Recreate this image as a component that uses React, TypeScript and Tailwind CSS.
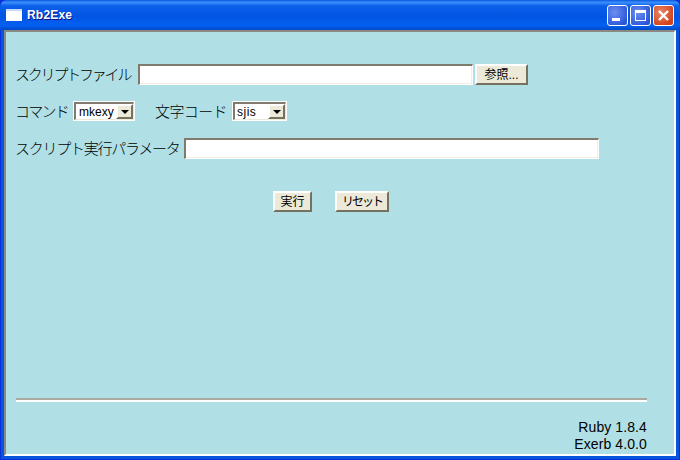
const sans = "font-['Liberation_Sans','Noto_Sans_CJK_JP',sans-serif]";

function TextBox({ className }: { className: string }) {
  return (
    <div className={`h-[21px] border-b border-l-2 border-r border-t-2 border-b-white border-l-[#7f7b6d] border-r-white border-t-[#7f7b6d] bg-white shadow-[inset_-1px_-1px_0_#f1efe2] ${className}`} />
  );
}

function PushButton({ label, className }: { label: string; className: string }) {
  return (
    <button className={`flex h-[21px] items-center justify-center border-2 border-b-[#75715f] border-l-white border-r-[#75715f] border-t-white bg-[#ece9d8] text-[12px] leading-none text-black ${className}`}>
      {label}
    </button>
  );
}

function Combo({ value, className, valueClass }: { value: string; className: string; valueClass: string }) {
  return (
    <div className={`h-[20px] border border-white ${className}`}>
      <div className="flex h-full items-stretch border-b border-l-2 border-r border-t-2 border-b-[#ece9d8] border-l-[#7f7b6d] border-r-[#ece9d8] border-t-[#7f7b6d] bg-white">
        <span className={`flex-1 self-center text-[12px] leading-none text-black ${valueClass}`}>{value}</span>
        <span className="flex w-[17px] items-center justify-center border-2 border-b-[#75715f] border-l-white border-r-[#75715f] border-t-white bg-[#ece9d8]">
          <svg width="8" height="4" viewBox="0 0 8 4"><path d="M0 0h8L4 4z" fill="#000" /></svg>
        </span>
      </div>
    </div>
  );
}

function CaptionButton({ kind }: { kind: "min" | "max" | "close" }) {
  const tone =
    kind === "close"
      ? "bg-[radial-gradient(circle_at_35%_35%,#e8886a,#d2431c_75%)]"
      : "bg-[radial-gradient(circle_at_35%_35%,#6c8ff0,#2a55d8_80%)]";
  return (
    <div className={`flex h-[21px] w-[21px] items-center justify-center rounded-[3px] border border-white ${tone}`}>
      {kind === "min" && (
        <svg width="19" height="19" viewBox="0 0 19 19"><rect x="4" y="12" width="8" height="3" fill="#fff" /></svg>
      )}
      {kind === "max" && (
        <svg width="19" height="19" viewBox="0 0 19 19">
          <path d="M4 4h11v11H4z M5 7v7h9V7z" fill="#fff" fillRule="evenodd" />
        </svg>
      )}
      {kind === "close" && (
        <svg width="19" height="19" viewBox="0 0 19 19">
          <path d="M5 5l9 9M14 5l-9 9" stroke="#fff" strokeWidth="2.4" />
        </svg>
      )}
    </div>
  );
}

export default function App() {
  return (
    <div className={`flex h-[460px] w-[680px] flex-col overflow-hidden bg-[#0831d9] ${sans}`}>
      <div className="flex h-[30px] shrink-0 items-center rounded-t-[7px] bg-[linear-gradient(to_bottom,#0a5ae0_0%,#3c8efb_8%,#0a5fe8_20%,#0255e4_55%,#0360f0_85%,#0148c8_100%)] pl-[6px] pr-[6px]">
        <div className="mr-[5px] h-[12px] w-[16px] border-t-2 border-[#c8d8f8] bg-white" />
        <span className="flex-1 text-[12px] font-bold tracking-[0.2px] text-white [text-shadow:1px_1px_0_#0f1089]">Rb2Exe</span>
        <div className="flex gap-[2px]">
          <CaptionButton kind="min" />
          <CaptionButton kind="max" />
          <CaptionButton kind="close" />
        </div>
      </div>

      <div className="flex flex-1 border-x border-b border-x-[#0831d9] border-b-[#0831d9] bg-[#0855dd] px-[3px] pb-[3px]">
        <div className="flex flex-1 flex-col border-2 border-b-white border-l-[#8a8a82] border-r-white border-t-[#8a8a82] bg-[#b0e0e6] pl-[10px] pr-[27px] text-[15px] font-light leading-none text-black">
          <div className="mt-[32px] flex items-center">
            <span className="-ml-px w-[123px] whitespace-nowrap tracking-[-2.2px]">スクリプトファイル</span>
            <TextBox className="w-[335px]" />
            <PushButton label="参照..." className="ml-[2px] w-[53px] font-normal" />
          </div>

          <div className="mt-[16px] flex items-center">
            <span className="-ml-px w-[58px] whitespace-nowrap tracking-[-1.75px]">コマンド</span>
            <Combo value="mkexy" className="w-[62px]" valueClass="pl-[3px] font-normal" />
            <span className="ml-[20px] w-[77px] whitespace-nowrap tracking-[-0.6px]">文字コード</span>
            <Combo value="sjis" className="w-[55px]" valueClass="pl-[2px] font-normal tracking-[0.5px]" />
          </div>

          <div className="mt-[17px] flex items-center">
            <span className="-ml-px w-[169px] whitespace-nowrap tracking-[-1.25px]">スクリプト実行パラメータ</span>
            <TextBox className="w-[415px]" />
          </div>

          <div className="ml-[257px] mt-[32px] flex gap-[23px]">
            <PushButton label="実行" className="w-[39px] font-normal" />
            <PushButton label="リセット" className="w-[54px] text-[11px] font-normal tracking-[-2px]" />
          </div>

          <div className="mt-[186px] h-[4px] border-t-2 border-[#a9a99f] bg-white" />

          <div className="mt-[17px] text-right text-[14px] font-normal leading-[17px] tracking-[0.1px]">
            <div>Ruby 1.8.4</div>
            <div>Exerb 4.0.0</div>
          </div>
        </div>
      </div>
    </div>
  );
}
